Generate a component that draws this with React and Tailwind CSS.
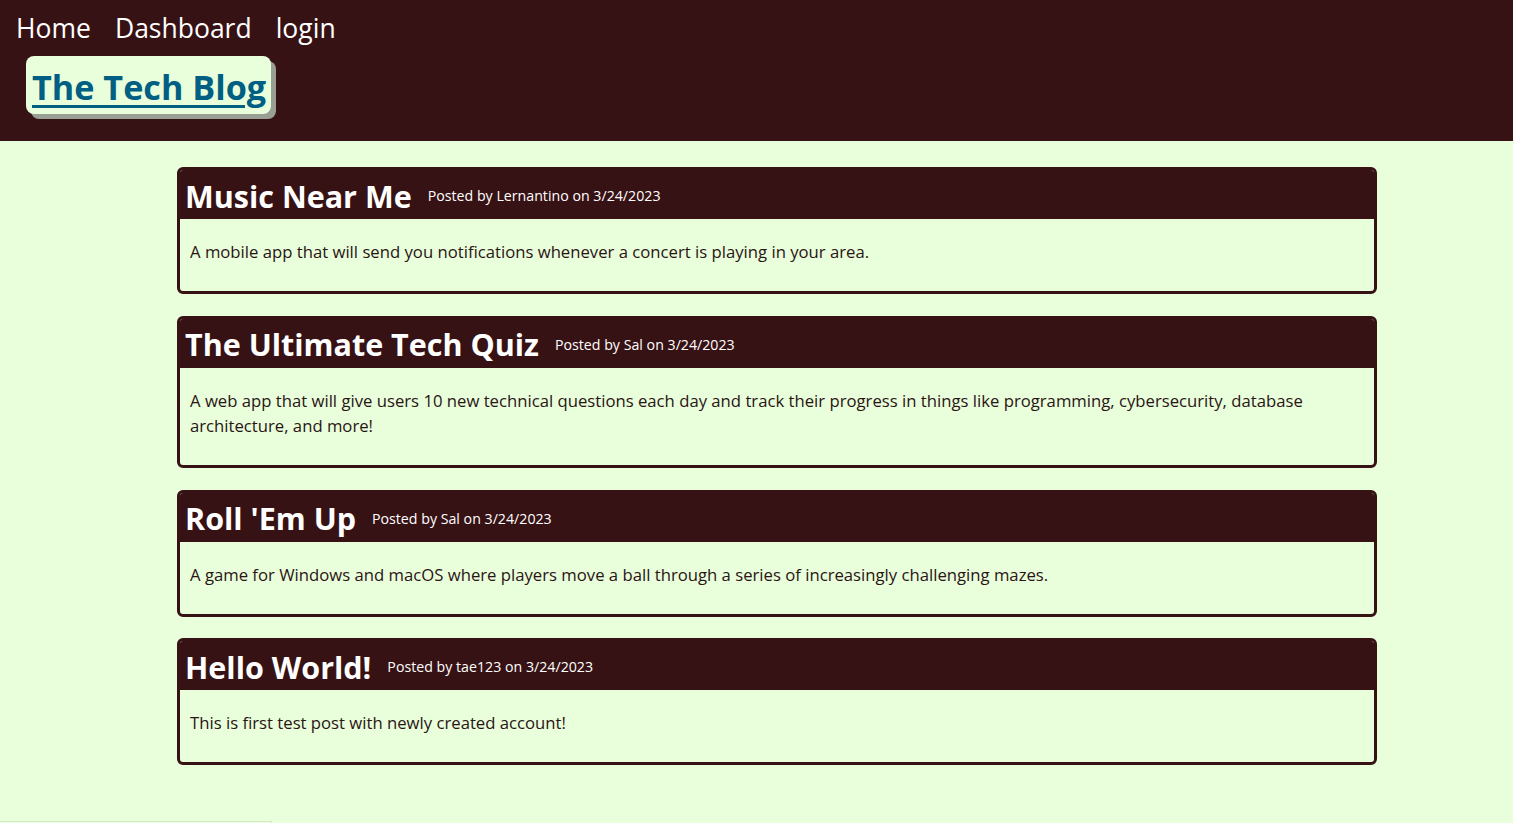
import React from "react";

const posts = [
  {
    title: "Music Near Me",
    by: "Lernantino",
    date: "3/24/2023",
    body: "A mobile app that will send you notifications whenever a concert is playing in your area.",
  },
  {
    title: "The Ultimate Tech Quiz",
    by: "Sal",
    date: "3/24/2023",
    body: "A web app that will give users 10 new technical questions each day and track their progress in things like programming, cybersecurity, database architecture, and more!",
  },
  {
    title: "Roll 'Em Up",
    by: "Sal",
    date: "3/24/2023",
    body: "A game for Windows and macOS where players move a ball through a series of increasingly challenging mazes.",
  },
  {
    title: "Hello World!",
    by: "tae123",
    date: "3/24/2023",
    body: "This is first test post with newly created account!",
  },
];

export default function App() {
  return (
    <div
      className="min-h-[823px] bg-[#e9fedb] relative"
      style={{ fontFamily: '"Open Sans", "Noto Sans", sans-serif' }}
    >
      <header className="bg-[#371214] h-[141px] pt-[8px]">
        <nav className="flex gap-[24px] pl-[16px] text-[26.5px] leading-[40px] text-white">
          <a>Home</a>
          <a>Dashboard</a>
          <a>login</a>
        </nav>
        <div className="pl-[26px] pt-[8px]">
          <div className="inline-block bg-[#e9fedb] rounded-[8px] pl-[6px] pr-[5px] h-[58px] shadow-[5px_5px_0_#9a9f95]">
            <a className="block text-[34.2px] leading-[62px] font-bold text-[#005f82] underline decoration-[3px] underline-offset-[5px]">
              The Tech Blog
            </a>
          </div>
        </div>
      </header>
      <main className="w-[1200px] ml-[177px] pt-[26px] flex flex-col gap-[21.5px]">
        {posts.map((p) => (
          <article
            key={p.title}
            className="border-[3px] border-[#371214] rounded-[6px] overflow-hidden"
          >
            <div className="bg-[#371214] h-[49px] flex items-center gap-[16px] pl-[5px] pt-[3px] text-white">
              <h2 className="text-[30.5px] font-bold leading-none">{p.title}</h2>
              <span className="text-[14.2px]">
                Posted by {p.by} on {p.date}
              </span>
            </div>
            <p className="text-[#2a1414] text-[16.7px] leading-[25.5px] pl-[10px] pr-[60px] pt-[20px] pb-[26.5px]">
              {p.body}
            </p>
          </article>
        ))}
      </main>
      <div className="absolute left-0 bottom-0 w-[272px] h-[2px] border-t border-r border-[#d4e8c8]" />
    </div>
  );
}
